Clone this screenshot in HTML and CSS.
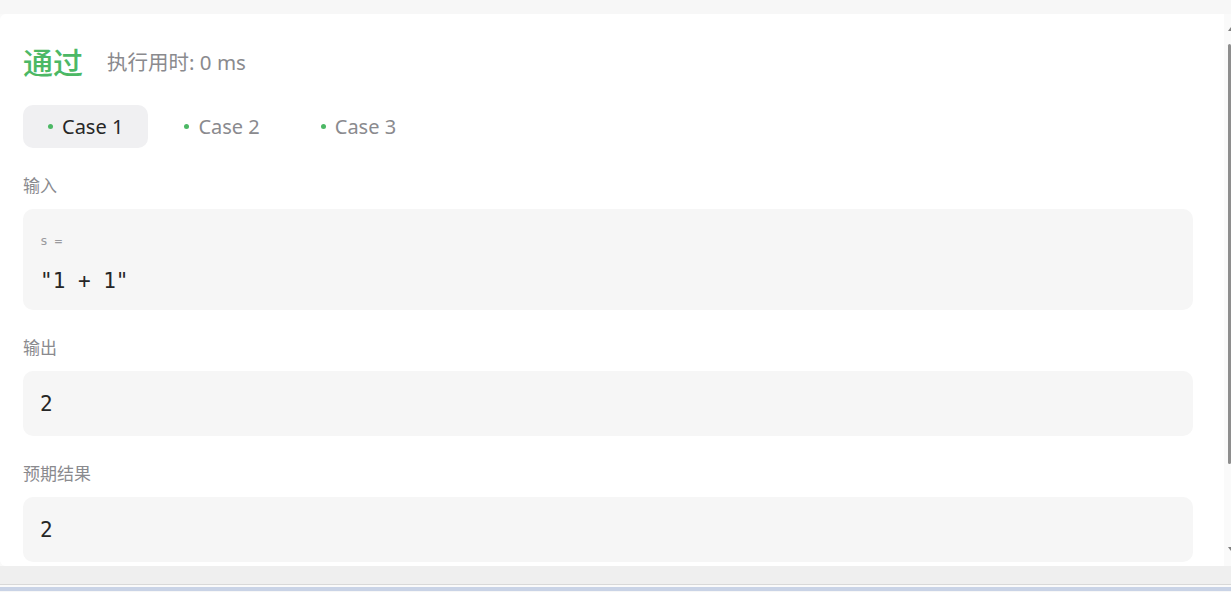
FILE: index.html
```html
<!DOCTYPE html>
<html lang="zh-CN">
<head>
<meta charset="utf-8">
<link rel="stylesheet" href="styles.css">
</head>
<body>
<div class="topband"></div>
<div class="main">
  <div class="panel">
    <div class="result">
      <span class="status">通过</span>
      <span class="runtime">执行用时: 0 ms</span>
    </div>
    <div class="tabs">
      <div class="tab active"><span class="dot"></span>Case 1</div>
      <div class="tab"><span class="dot"></span>Case 2</div>
      <div class="tab"><span class="dot"></span>Case 3</div>
    </div>
    <div class="section">
      <div class="label">输入</div>
      <div class="box box-input">
        <div class="var">s =</div>
        <div class="val">"1 + 1"</div>
      </div>
    </div>
    <div class="section">
      <div class="label">输出</div>
      <div class="box"><div class="val">2</div></div>
    </div>
    <div class="section">
      <div class="label">预期结果</div>
      <div class="box"><div class="val">2</div></div>
    </div>
  </div>
  <div class="scrollbar">
    <div class="arrow up"></div>
    <div class="thumb"></div>
    <div class="arrow down"></div>
  </div>
</div>
<div class="footer"></div>
<div class="bottomstrip"></div>
</body>
</html>
```
FILE: styles.css
```css
html, body {
  margin: 0;
  padding: 0;
  height: 592px;
  overflow: hidden;
  background: #f7f7f7;
  font-family: "Noto Sans", "Noto Sans CJK SC", sans-serif;
}
.topband {
  height: 14px;
  background: #f7f7f7;
}
.main {
  display: flex;
  height: 552px;
  background: #fafafa;
}
.panel {
  width: 1224px;
  background: #ffffff;
  border-bottom-left-radius: 6px;
  border-top-left-radius: 6px;
  box-sizing: border-box;
  padding: 28px 31px 0 23px;
  overflow: hidden;
}
.result {
  display: flex;
  align-items: center;
  gap: 24px;
  height: 38px;
}
.status {
  font-family: "Noto Sans CJK SC", sans-serif;
  font-size: 30px;
  font-weight: 500;
  color: #4cb865;
  line-height: 38px;
}
.runtime {
  font-size: 20.5px;
  color: #8a8a8e;
  line-height: 38px;
  padding-top: 2px;
}
.tabs {
  display: flex;
  gap: 11px;
  margin-top: 25px;
  height: 43px;
}
.tab {
  display: flex;
  align-items: center;
  gap: 9px;
  padding: 0 25px;
  border-radius: 10px;
  font-size: 20px;
  color: #8a8a8e;
}
.tab.active {
  background: #f0f0f2;
  color: #262626;
}
.dot {
  width: 5px;
  height: 5px;
  border-radius: 50%;
  background: #4cb865;
}
.section {
  margin-top: 27px;
}
.label {
  font-family: "Noto Sans CJK SC", sans-serif;
  font-size: 17px;
  color: #8a8a8e;
  line-height: 20px;
  height: 20px;
}
.box {
  margin-top: 14px;
  background: #f6f6f6;
  border-radius: 10px;
  padding: 0 17px;
  height: 65px;
  display: flex;
  flex-direction: column;
  justify-content: center;
}
.box-input {
  height: 101px;
  justify-content: flex-start;
  padding-top: 23px;
  box-sizing: border-box;
}
.var {
  font-family: "DejaVu Sans Mono", monospace;
  font-size: 13px;
  letter-spacing: -0.6px;
  color: #9a9a9e;
  line-height: 18px;
}
.val {
  font-family: "DejaVu Sans Mono", monospace;
  font-size: 21px;
  color: #262626;
  line-height: 28px;
}
.box-input .val {
  margin-top: 21px;
  line-height: 20px;
}
.scrollbar {
  width: 7px;
  position: relative;
  background: #fafafa;
}
.thumb {
  position: absolute;
  left: 4px;
  width: 3px;
  top: 30px;
  height: 420px;
  background: #8e8e8e;
  border-radius: 2px;
}
.arrow {
  position: absolute;
  left: 4px;
  width: 0;
  height: 0;
  border-left: 3px solid transparent;
  border-right: 3px solid transparent;
}
.arrow.up {
  top: 13px;
  border-bottom: 4px solid #808080;
}
.arrow.down {
  top: 533px;
  border-top: 4px solid #808080;
}
.footer {
  height: 18px;
  background: #efefef;
  border-bottom: 1px solid #d8d8d8;
}
.bottomstrip {
  height: 2px;
  background: #fafafa;
  border-bottom: 4px solid #c9d3e6;
}
```
